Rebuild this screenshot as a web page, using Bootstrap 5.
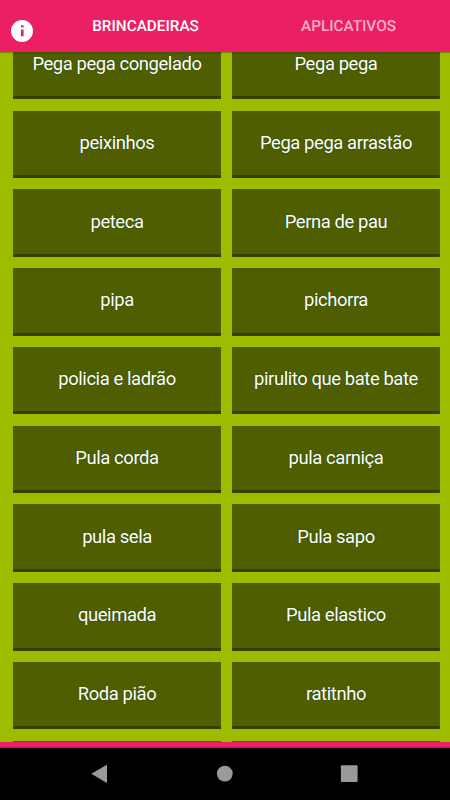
<!DOCTYPE html>
<html lang="pt-BR">
<head>
<meta charset="utf-8">
<meta name="viewport" content="width=device-width, initial-scale=1">
<title>Brincadeiras</title>
<link href="https://cdn.jsdelivr.net/npm/bootstrap@5.3.0/dist/css/bootstrap.min.css" rel="stylesheet">
<style>
  body { font-family: Roboto, "Liberation Sans", sans-serif; background: #9dbc00; text-rendering: geometricPrecision; }
  .topbar { height: 52px; background: #eb1f63; box-shadow: 0 1px 1px rgba(60, 60, 0, .35); z-index: 1; }
  .info-btn { width: 44px; padding: 9px 0 0 11px; line-height: 0; }
  .tab-btn { font-size: 15.3px; font-weight: 500; line-height: 54px; color: #fff; }
  .tab-btn.idle { color: #f9b0c9; }
  .game-list { min-height: 0; }
  .games { display: grid; grid-template-columns: 208px 208px; grid-auto-rows: 67.5px; gap: 11.25px 11px; margin: -20.15px 0 0 13px; }
  .game { background: #4e5e00; border: 0; border-bottom: 3px solid #343f00; border-radius: 0; color: #fff; padding: 0; font-size: 18.4px; letter-spacing: -.4px; line-height: 28px; text-shadow: 0 0 1px rgba(0, 50, 25, .8); }
  .accent { height: 6px; background: #eb1f63; border-bottom: 1px solid #c9104c; }
  .sysbar { height: 52px; background: #000; }
</style>
<script src="https://cdn.jsdelivr.net/npm/bootstrap@5.3.0/dist/js/bootstrap.bundle.min.js"></script>
</head>
<body class="vh-100 d-flex flex-column overflow-hidden">
  <header class="topbar position-relative d-flex align-items-center flex-shrink-0">
    <div class="info-btn">
      <svg width="22" height="22" viewBox="0 0 22 22"><circle cx="11" cy="11" r="11" fill="#fff"/><path d="M10 5.200h2.600v2.200H10zM10 9.400h2.600v6.800H10z" fill="#eb1f63"/></svg>
    </div>
    <nav class="d-flex flex-fill text-center">
      <a class="tab-btn w-50 text-decoration-none" href="#">BRINCADEIRAS</a>
      <a class="tab-btn idle w-50 text-decoration-none" href="#">APLICATIVOS</a>
    </nav>
  </header>
  <main class="game-list flex-fill overflow-hidden">
    <div class="games">
      <button class="game">Pega pega congelado</button><button class="game">Pega pega</button>
      <button class="game">peixinhos</button><button class="game">Pega pega arrastão</button>
      <button class="game">peteca</button><button class="game">Perna de pau</button>
      <button class="game">pipa</button><button class="game">pichorra</button>
      <button class="game">policia e ladrão</button><button class="game">pirulito que bate bate</button>
      <button class="game">Pula corda</button><button class="game">pula carniça</button>
      <button class="game">pula sela</button><button class="game">Pula sapo</button>
      <button class="game">queimada</button><button class="game">Pula elastico</button>
      <button class="game">Roda pião</button><button class="game">ratitnho</button>
      <button class="game"></button><button class="game"></button>
    </div>
  </main>
  <div class="accent flex-shrink-0"></div>
  <footer class="sysbar flex-shrink-0">
    <svg class="d-block" width="450" height="52" viewBox="0 0 450 52" fill="#9a9a9a"><path d="M91.300 25.700 106 17.200q1-.5 1 .5v16.400q0 1-1 .4Z"/><circle cx="224.800" cy="25.600" r="7.900"/><rect x="340.900" y="17.200" width="16.700" height="16.800" rx="1"/></svg>
  </footer>
</body>
</html>
